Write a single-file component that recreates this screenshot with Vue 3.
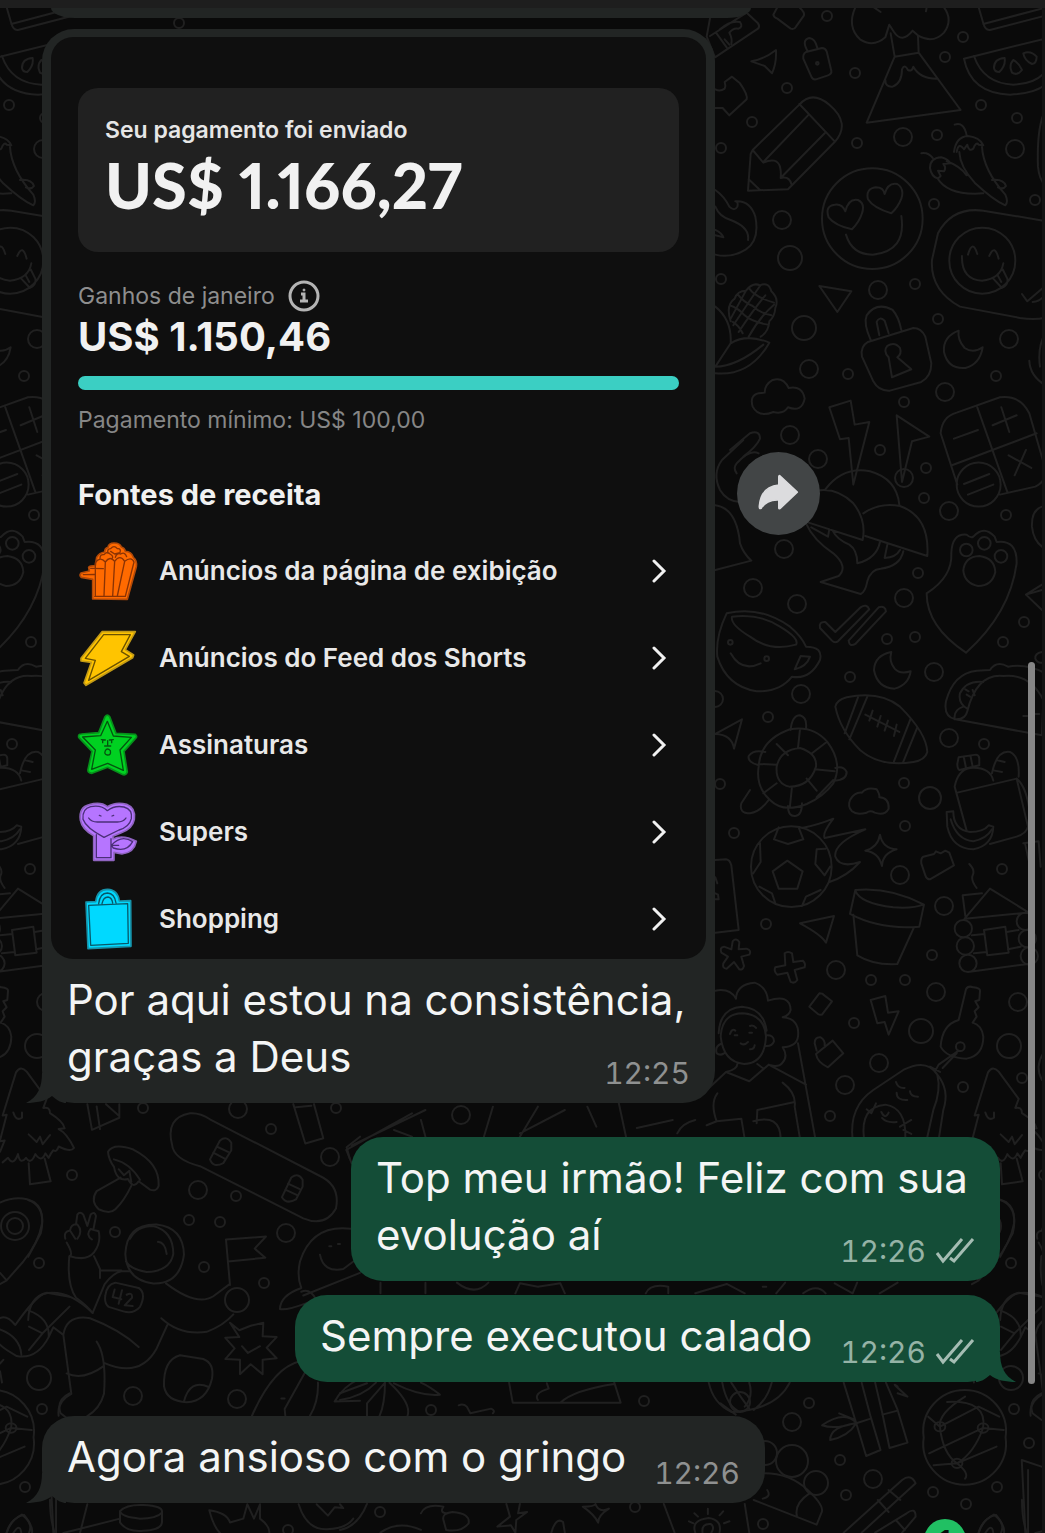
<template>
  <div class="chat">
    <svg class="wallpaper" aria-hidden="true">
      <defs>
        <g id="doodles">
          <circle v-for="(c, i) in bubbles" :key="'c' + i" :cx="c[0]" :cy="c[1]" :r="c[2]" />
          <g v-for="(group, i) in doodles" :key="'g' + i" :transform="group.transform">
            <path v-for="(d, j) in group.paths" :key="j" :d="d" />
          </g>
        </g>
      </defs>
      <use href="#doodles" />
      <use href="#doodles" x="-972" />
      <use href="#doodles" x="972" />
    </svg>

    <header class="top-bar"></header>
    <div class="previous-message"></div>

    <main class="messages">
      <div class="row">
        <article class="bubble incoming with-photo">
          <section class="photo">
            <div class="payment-card">
              <p class="payment-label">Seu pagamento foi enviado</p>
              <p class="payment-value">US$ 1.166,27</p>
            </div>

            <div class="earnings-label">
              <span>Ganhos de janeiro</span>
              <svg class="info-icon" viewBox="0 0 32 32" fill="none" stroke="currentColor">
                <circle cx="16" cy="16" r="14" stroke-width="3" />
                <path d="M13 14h3v7M12 21h8" stroke-width="3" />
                <circle cx="16" cy="10" r="1" stroke-width="1" fill="currentColor" />
              </svg>
            </div>
            <p class="earnings-value">US$ 1.150,46</p>
            <div class="progress"></div>
            <p class="minimum">Pagamento mínimo: US$ 100,00</p>

            <h2 class="sources-title">Fontes de receita</h2>
            <ul class="sources">
              <li v-for="source in sources" :key="source.label" class="source">
                <svg class="source-icon" :viewBox="source.viewBox">
                  <path
                    v-for="(shape, i) in source.shapes"
                    :key="i"
                    :d="shape.d"
                    :fill="shape.fill || 'none'"
                    :stroke="shape.stroke"
                    :stroke-width="shape.width || 4"
                  />
                </svg>
                <span class="source-label">{{ source.label }}</span>
                <svg class="chevron" viewBox="0 0 16 26">
                  <path d="M3 4l10 10L3 24" />
                </svg>
              </li>
            </ul>
          </section>

          <div class="text">
            Por aqui estou na consistência, graças a Deus
            <span class="meta"><time>12:25</time></span>
          </div>
          <svg class="tail" viewBox="0 0 40 30"><path :d="tailPath" /></svg>
        </article>

        <button class="forward" type="button" aria-label="Encaminhar">
          <svg viewBox="112 36 248 248">
            <path d="M240 107L292 156L240 205Q237 206 237 203V179Q201 177 184 204Q178 207 179 197Q184 140 237 135V110Q237 106 240 107Z" />
          </svg>
        </button>
      </div>

      <div v-for="message in messages" :key="message.text" class="row" :class="{ own: message.own, next: message.next }">
        <article class="bubble" :class="message.own ? 'outgoing' : 'incoming'">
          <div class="text">
            {{ message.text }}
            <span class="meta">
              <time>{{ message.time }}</time>
              <svg v-if="message.own" class="ticks" viewBox="0 0 40 28">
                <path d="M2 16l6 8L27 2M15 21l4 3L38 2" />
              </svg>
            </span>
          </div>
          <svg v-if="message.tail" class="tail" viewBox="0 0 40 30"><path :d="tailPath" /></svg>
        </article>
      </div>
    </main>

    <div class="scroll-thumb"></div>
    <div class="edge"></div>
    <span class="unread">1</span>
  </div>
</template>

<script setup>
const tailPath = 'M16 0C16 14 12 24 0 30C10 30 20 28 26 23C32 28 36 30 40 30V0Z'

const messages = [
  { text: 'Top meu irmão! Feliz com sua evolução aí', time: '12:26', own: true },
  { text: 'Sempre executou calado', time: '12:26', own: true, tail: true, next: true },
  { text: 'Agora ansioso com o gringo', time: '12:26', tail: true }
]

const sources = [
  {
    label: 'Anúncios da página de exibição',
    viewBox: '54 30 180 180',
    shapes: [
      { d: 'M98 207V148L64 142Q57 136 63 129L88 123L86 112Q90 107 106 107L110 82Q118 68 134 66Q134 54 144 52Q146 39 162 39Q180 39 184 51Q194 54 196 64Q214 64 220 82Q232 92 229 110L202 208Z', fill: '#ff6a00', stroke: '#b34a08', width: 5 },
      { d: 'M106 198V98Q120 78 136 96L132 198M136 96Q150 76 164 94L158 198M164 94Q180 72 194 94L172 198M194 94Q214 78 222 96L196 199H104M92 115L130 116M70 134L104 133M120 86Q120 72 132 74Q142 62 150 72Q162 78 156 86M144 70Q140 56 152 56Q162 44 172 56Q184 54 180 68L164 72L152 64M166 82Q170 68 182 72Q194 64 200 80', stroke: '#8a3304', width: 4 }
    ]
  },
  {
    label: 'Anúncios do Feed dos Shorts',
    viewBox: '54 292 180 180',
    shapes: [
      { d: 'M126 306H226L196 360L221 376L218 384L78 467L72 460L94 398L63 394V386Z', fill: '#ffc400', stroke: '#c29a16', width: 5 },
      { d: 'M131 315H211L184 366L208 380L86 452L106 392L76 386Z', stroke: '#6b5200', width: 4 }
    ]
  },
  {
    label: 'Assinaturas',
    viewBox: '54 -78 180 180',
    shapes: [
      { d: 'M135 -70Q142 -79 149 -70L168 -20L226 -17Q234 -10 226 -4L192 34L202 96Q198 108 186 103L143 82L96 100Q82 99 84 88L96 34L56 -8Q54 -18 64 -18L116 -22Z', fill: '#00d121', stroke: '#078f1b', width: 5 },
      { d: 'M142 -56L160 -12L214 -8L180 30L190 91L143 70L95 88L106 30L68 -9L122 -13Z', stroke: '#04540f', width: 4 },
      { d: 'M124 -1L136 0M148 0L160 -1M128 0V8M155 0V8M143 2V16M134 18H152M136 32Q142 22 151 32Q154 46 142 45Q131 43 136 32', stroke: '#04540f', width: 4 }
    ]
  },
  {
    label: 'Supers',
    viewBox: '54 183 180 180',
    shapes: [
      { d: 'M142 200Q168 184 200 193Q228 204 223 238Q218 266 184 278L159 289V297Q188 282 229 304Q222 338 186 342L162 337V361H101V287Q66 268 61 240Q56 202 88 194Q122 184 142 200Z', fill: '#b675ff', stroke: '#8f64c0', width: 5 },
      { d: 'M142 212Q164 195 192 201Q218 208 214 236Q208 261 177 270L132 292Q78 264 69 238Q66 206 92 200Q124 194 142 212ZM109 284V353H153V296M154 316Q184 282 218 305Q200 338 160 324L154 316H176M86 234Q94 246 112 246H172Q190 246 198 234M118 226L123 228M156 228L161 226', stroke: '#4b2f78', width: 4 }
    ]
  },
  {
    label: 'Shopping',
    viewBox: '54 445 180 180',
    shapes: [
      { d: 'M78 487L107 486Q112 449 143 449Q173 450 178 484L212 483L213 620L84 627Z', fill: '#00d9ff', stroke: '#1792a9', width: 5 },
      { d: 'M86 497L203 492L205 611L92 617ZM116 492Q120 460 142 460Q164 461 168 490M126 492Q130 472 144 472Q156 474 158 490', stroke: '#07586a', width: 4 }
    ]
  }
]

// Small circles between the drawings: [cx, cy, r]
const bubbles = [
  [827, 16, 5], [963, 37, 5], [945, 57, 5], [855, 73, 5], [787, 88, 5], [752, 122, 5], [721, 148, 5],
  [857, 143, 5], [903, 137, 9], [937, 135, 5], [981, 105, 5], [1017, 118, 5], [1015, 149, 9], [934, 204, 5],
  [1035, 200, 5], [782, 220, 9], [790, 258, 12], [721, 279, 5], [878, 290, 9], [915, 284, 5], [804, 328, 12],
  [809, 369, 9], [848, 374, 5], [938, 319, 5], [1009, 339, 9], [996, 376, 5], [945, 392, 9], [904, 402, 5],
  [790, 435, 9], [818, 459, 9], [880, 450, 5], [904, 478, 9], [926, 468, 5], [924, 498, 5], [949, 511, 9],
  [1006, 515, 5], [784, 549, 9], [753, 588, 9], [797, 604, 9], [918, 573, 5], [904, 598, 9], [887, 639, 5],
  [915, 637, 5], [1024, 622, 5], [1003, 642, 5], [850, 677, 5], [934, 672, 9], [801, 694, 9], [715, 699, 8],
  [768, 717, 5], [949, 738, 9], [984, 744, 5], [720, 784, 5], [904, 783, 5], [930, 798, 11], [905, 826, 5],
  [734, 833, 5], [900, 875, 9], [1002, 869, 5], [944, 906, 9], [766, 924, 5], [932, 955, 5], [836, 970, 9],
  [871, 980, 5], [905, 980, 5], [936, 992, 9], [1018, 1002, 9], [854, 1023, 5], [921, 1031, 12], [879, 1063, 9],
  [1009, 1046, 12], [845, 1085, 9], [963, 1087, 5], [1022, 1078, 5], [830, 1116, 5], [143, 1108, 5],
  [238, 1109, 9], [271, 1129, 5], [336, 1108, 5], [330, 1157, 9], [72, 1175, 5], [198, 1190, 9], [236, 1196, 5],
  [189, 1220, 5], [220, 1222, 5], [115, 1232, 5], [286, 1233, 9], [39, 1263, 5], [204, 1267, 5], [264, 1283, 5],
  [39, 1378, 12], [133, 1396, 9], [237, 1399, 9], [42, 1409, 5], [25, 1487, 5], [288, 1530, 5], [461, 1115, 9],
  [644, 1401, 5], [809, 1403, 5], [792, 1422, 9], [1029, 1443, 5], [840, 1460, 5], [873, 1479, 9], [846, 1495, 5],
  [933, 1492, 5], [966, 1504, 5], [431, 1410, 5], [380, 1512, 5], [635, 1507, 5], [763, 1524, 5], [179, 23, 5],
  [740, 1402, 10], [792, 1461, 16], [765, 1453, 12], [816, 1483, 12], [15, 1226, 14], [15, 1226, 8], [237, 1300, 12]
]

const doodles = [
  {
    transform: 'translate(700 0) scale(.3333)',
    paths: [
      // money, tile, small lock
      'M30 55L20 110M20 110L45 172L175 85Q180 78 174 70L140 38L30 108M60 88Q90 60 120 66Q130 80 116 86Q100 82 88 98Q98 116 94 132M48 98L80 142M74 118L88 134',
      'M232 22L220 44Q222 52 232 56L272 86Q282 90 288 80L312 46Q314 36 300 24',
      'M322 152Q304 120 328 114Q346 116 352 144M318 156L366 144Q376 144 380 154L394 212Q396 222 384 226L348 238Q338 240 334 230L310 176Q308 162 318 156ZM348 190A4 4 0 0 0 356 190A4 4 0 0 0 348 190',
      'M154 184Q192 178 228 150Q230 190 216 220L194 198Z',
      // volcano
      'M466 22Q440 80 480 118Q520 144 556 112L568 74L582 96Q606 132 638 92L656 108Q700 132 732 98Q760 60 732 22M522 22L542 36M680 22L678 34M572 100L584 170L656 158L654 108M584 170L500 368L782 330L656 158M556 240Q556 262 578 260Q606 250 606 208Q614 190 624 210Q636 216 640 200Q660 236 710 236',
      // watermelon slice
      'M836 22L850 70Q856 92 870 90L1040 46M850 72L1040 22M792 176L1100 100M792 176Q812 280 930 284Q1020 280 1050 240M822 168Q850 250 940 254Q1000 252 1030 222M882 204Q882 176 914 174Q918 196 898 216Q884 216 882 204ZM932 206Q930 190 940 180Q958 190 966 210Q952 228 936 218ZM970 160Q992 150 1010 170Q1010 190 996 192Q974 182 970 160Z',
      // puzzle piece
      'M46 268Q60 276 74 266Q78 258 74 246L96 230L120 250Q144 284 140 298L88 346L68 324H46',
      // pencil
      'M158 450L298 314Q336 270 388 314Q454 370 404 426L264 568L144 572L152 462ZM298 312L404 424M324 346L190 486M374 400L244 532M158 450L190 488Q230 470 240 500Q244 516 242 534Q268 528 274 552M146 538L180 570',
      // chillies
      'M764 374Q792 364 800 406M762 456Q768 410 804 408Q840 412 850 436L836 434Q828 424 820 446Q806 456 802 434L792 448Q776 424 770 456M778 456Q780 500 824 548Q880 600 916 616Q926 606 916 584Q850 510 846 440M876 540Q910 536 918 558Q910 570 894 562M664 460Q684 456 698 474M690 504Q690 474 724 472Q746 478 750 490L730 492Q740 504 732 514L714 512L722 528L714 536Q694 530 690 504M712 534Q744 588 850 580M740 484Q780 498 800 526',
      // smiley with heart eyes
      'M366 656A150 150 0 1 1 668 656A150 150 0 1 1 366 656ZM456 688Q404 676 386 652Q374 618 404 614Q426 610 436 634Q446 594 474 600Q496 610 486 640Q478 666 456 688ZM574 640Q520 624 504 598Q496 566 528 562Q550 562 554 582Q564 546 592 552Q614 566 604 596Q594 622 574 640ZM438 704Q456 764 518 764Q620 754 604 648',
      // flame
      'M46 570Q74 590 88 620Q104 636 112 620Q116 606 106 604Q150 600 166 650Q180 720 138 748Q94 776 46 764M46 620Q58 650 92 660Q150 682 144 720M46 690Q66 700 70 712L46 706',
      // phone with tongue smiley
      'M1030 662L850 632Q756 620 714 700L696 780Q690 870 780 920L960 954Q1010 962 1050 950M748 782A99 99 0 1 1 946 782A99 99 0 1 1 748 782ZM804 764Q818 716 832 762M868 768Q884 730 896 776M786 768Q784 838 846 842Q902 836 910 790M880 836L906 864Q926 854 922 836L908 808M892 824L904 846',
      'M966 882L982 904L1026 866M998 906Q1020 906 1040 880',
      // corn
      'M92 964Q76 916 104 896Q112 872 138 872Q158 846 180 856Q206 844 214 874Q238 896 226 924Q224 950 208 964Q206 996 182 1010M114 884Q130 906 158 918Q180 940 214 946M90 916Q116 926 134 946Q156 966 204 974M98 966Q116 976 128 1000M148 866Q166 892 222 908M138 872L92 956M180 858Q150 900 100 976M196 886Q160 930 116 996M222 914Q180 950 146 1010M46 920Q96 960 92 1030L46 1100M92 1030Q140 1000 208 1028Q150 1130 46 1120M46 1100Q110 1100 190 1034',
      'M358 858L454 874L412 936Z',
      // padlock
      'M512 1020Q490 970 500 946Q530 904 578 930Q596 950 604 990M538 1006L530 966Q538 948 554 962L566 1000M504 1026L640 984Q664 984 676 1010L694 1090Q694 1130 664 1146L570 1172Q536 1174 520 1144L486 1070Q480 1040 504 1026ZM566 1072Q548 1054 562 1038Q584 1024 600 1044Q606 1062 592 1072L634 1108L576 1132Z',
      'M776 992Q728 1010 732 1056Q744 1108 796 1104Q840 1092 848 1042Q820 1062 794 1044Q772 1020 776 992Z',
      'M176 1180Q148 1186 158 1220Q176 1254 220 1236Q250 1244 264 1222Q306 1238 314 1196Q308 1156 266 1164Q250 1130 218 1140Q194 1154 194 1178Z',
      'M388 1222L452 1202L464 1274L508 1266L460 1454L446 1314L420 1318Z',
      'M590 1246L688 1310L636 1324L606 1446Z',
      // calculator
      'M722 1300Q726 1250 770 1238L900 1192Q960 1184 988 1240L1040 1420Q1030 1450 1006 1460L900 1484M722 1300L772 1454M832 1222L922 1476M756 1396L1010 1300M762 1316L834 1290M878 1276L950 1246M904 1222L928 1296M926 1366L994 1404M978 1350L944 1426M770 1454A66 66 0 1 0 902 1454A66 66 0 1 0 770 1454M792 1452L868 1422M804 1484L880 1454',
      'M988 1082Q990 1130 1040 1158M1036 1000Q1012 1040 1020 1100M1036 330Q1010 380 1014 500Q1018 540 1036 556',
      'M90 1350L150 1300Q180 1290 180 1316Q170 1340 130 1370'
    ]
  },
  {
    transform: 'translate(700 440) scale(.3333)',
    paths: [
      'M130 0L66 60Q36 100 60 150Q80 184 120 186M176 40Q150 26 110 70Q98 84 110 100',
      'M46 196Q110 204 120 310Q130 340 154 362L46 390',
      // mushrooms
      'M376 148Q430 78 510 94Q590 116 598 194M320 160Q400 130 460 190Q500 240 488 300L326 248M490 220Q540 186 600 198Q690 230 682 348L496 288M318 250Q340 300 400 340Q446 380 416 408L362 426L482 462Q496 456 502 424Q512 388 542 386Q600 380 610 334M334 262L384 290L388 268M398 272Q410 298 448 314Q472 330 472 370Q530 356 540 306M562 314L554 354Q588 352 600 330',
      // paw
      'M680 460Q758 410 754 340Q756 280 800 284Q812 296 820 290Q852 254 884 290Q890 306 890 306Q952 298 950 370Q930 520 798 638Q680 560 680 460ZM780 330A19 19 0 1 0 818 330A19 19 0 1 0 780 330M834 310A19 19 0 1 0 872 310A19 19 0 1 0 834 310M884 349A19 19 0 1 0 922 349A19 19 0 1 0 884 349M790 392Q794 350 838 348Q884 354 886 396Q876 438 834 438Q794 430 790 392Z',
      'M1026 200Q994 210 996 260Q1000 300 1026 320M1026 434L978 464L1026 510M978 464L1026 450',
      // cup
      'M80 520Q180 496 270 560Q306 590 318 620Q370 620 360 660Q330 720 276 710Q240 756 170 754Q80 740 52 650Q46 590 80 520ZM96 530Q180 520 240 560Q300 596 288 614Q210 636 150 590Q90 554 96 530ZM302 648L330 650Q320 680 284 688ZM84 607A7 7 0 0 0 98 607A7 7 0 0 0 84 607M193 656A7 7 0 0 0 207 656A7 7 0 0 0 193 656M92 640Q124 698 182 670',
      // double check
      'M360 564Q356 544 376 546L406 576L482 502Q500 490 508 508L414 604Q404 610 396 602ZM446 602L536 502Q556 496 558 514L466 612Q448 622 446 602Z',
      'M574 636Q524 646 522 690Q532 744 584 746Q626 734 632 694Q600 704 584 686Q566 664 574 636Z',
      // football
      'M406 800Q410 780 440 772Q540 752 600 800Q680 880 682 936Q676 960 640 966Q540 982 480 930Q420 870 406 800ZM474 772L434 880M502 770L448 898M632 836L582 964M652 862L608 970M496 824L598 876M518 812L508 842M542 828L532 860M564 842L554 872M590 854L582 888',
      // taco
      'M766 838Q730 830 738 784Q760 700 830 692Q860 690 870 690Q890 660 924 680Q980 670 1036 700M766 838Q796 840 802 814Q830 700 910 708Q990 700 1030 780L1026 886L766 838M802 806Q774 790 780 760Q800 720 850 726M790 800Q760 810 764 838M800 764L810 770M796 748L806 754M818 750L824 766M970 828H982M1006 822H1018',
      'M46 882L126 838L102 926Q96 884 46 882Z',
      // turtle
      'M176 980Q180 900 270 868Q340 856 382 906Q430 970 400 1030Q370 1070 320 1092Q250 1120 210 1080Q166 1040 176 980ZM230 980Q240 930 300 924Q352 940 348 980Q330 1040 268 1040Q226 1030 230 980ZM272 870Q276 826 300 826Q322 832 318 866M176 976Q142 966 146 948Q160 928 196 936M404 1022Q440 1020 440 996Q430 976 406 984M300 868L294 924M380 906L336 940M230 912L264 946M176 972L230 974M344 988L404 994M230 1030L190 1060M320 1016L350 1052M276 1040L270 1098M150 1050L124 1090Q116 1120 150 1120Q180 1116 206 1080M264 1098Q264 1130 286 1128Q306 1126 306 1090M350 1072L400 1020',
      // lunch bag
      'M776 952L828 944Q838 946 838 956V976L778 990Q772 986 772 972ZM792 954L798 984M812 950L818 980M764 1040Q774 990 810 984Q870 980 880 1022M876 1000Q890 930 930 936Q960 950 956 1010M890 960L914 966M884 992L906 996M772 1058L950 1016L984 1160Q980 1180 950 1190L870 1212M764 1040L800 1172M950 1016Q980 1040 990 1120',
      'M1026 636Q1004 640 1006 656Q1012 670 1026 668'
    ]
  },
  {
    transform: 'translate(700 780) scale(.3333)',
    paths: [
      'M450 60Q464 36 486 38Q500 20 530 28Q540 44 538 52Q568 54 566 86Q554 108 524 98Q510 90 500 98Q470 106 456 94Q442 80 450 60Z',
      // banana
      'M740 96L760 94Q760 150 810 156Q850 156 866 136L880 140Q878 196 820 208Q756 206 742 140Z',
      'M752 118Q770 180 820 184Q860 176 876 148',
      // flaming ball
      'M153 260A121 121 0 1 1 395 260A121 121 0 1 1 153 260ZM262 242L308 274L292 326L236 326L218 274ZM236 142L222 178L264 192L310 178L296 142M180 190L182 246L160 280M376 206L350 208L346 252L374 286L390 260M178 320L216 340L226 370M362 330L318 350L306 378M306 144Q350 136 400 116Q366 160 374 174Q420 164 496 148Q400 190 406 230Q420 266 480 246Q440 290 388 306',
      'M540 164Q548 206 590 208Q548 220 546 258Q536 216 496 212Q534 202 540 164Z',
      'M670 230L702 222L708 214L722 220L736 212L748 218L762 256L690 298Q680 298 676 286L664 250Q662 236 670 230Z',
      'M46 240L78 238Q90 240 94 256L116 450L46 458M46 340L54 344L56 358H46M46 292L52 310',
      // flower pot
      'M466 330Q570 320 672 374L658 440Q540 450 450 402ZM466 332Q480 370 580 382Q640 386 670 374M460 404L472 526Q520 556 592 552L642 442',
      'M300 430L402 408L378 488Q364 464 300 430Z',
      // asterisk and plus
      'M98 484Q108 472 118 486L116 508L140 506Q156 512 148 524L124 530L132 558Q128 572 118 568L102 546L80 566Q66 566 70 550L84 530L64 518Q58 502 72 500L94 508Z',
      'M254 520Q264 512 276 520L280 546L308 542Q318 550 314 562L284 570L292 600Q284 612 272 606L262 578L232 584Q220 574 226 562L256 556Z',
      // log cabin
      'M808 252Q826 270 818 286Q812 300 830 324M788 346L846 340M788 346L796 408M794 416L870 326L990 400M794 416L980 398M764 446A26 26 0 1 0 816 446A26 26 0 1 0 764 446M770 498A26 26 0 1 0 822 498A26 26 0 1 0 770 498M778 550A26 26 0 1 0 830 550A26 26 0 1 0 778 550M950 424A26 26 0 1 0 1002 424A26 26 0 1 0 950 424M956 476A26 26 0 1 0 1008 476A26 26 0 1 0 956 476M962 528A26 26 0 1 0 1014 528A26 26 0 1 0 962 528M816 466L854 462M920 456L956 450M822 520L860 516M924 508L962 500M852 450L916 440L926 518L862 526ZM804 576L984 552M970 190L1016 184L1022 260M976 194L986 240',
      // woman
      'M46 632Q90 624 108 656Q110 612 164 608Q200 620 204 662Q270 640 272 690Q268 706 248 712Q300 716 294 770Q290 800 248 802Q266 830 246 850Q236 862 212 856M62 770Q66 700 128 700Q194 704 198 770Q194 850 132 852Q70 846 62 770ZM56 760Q60 684 126 680Q190 684 200 752M198 766Q222 764 222 784Q216 800 196 798M62 792Q44 800 50 820Q60 828 72 820M90 762Q96 744 106 752M150 738Q160 734 168 744M104 766H112M148 758H156M122 790Q134 798 144 786M150 808Q162 808 164 796M112 852Q112 868 78 876L148 904L206 854L318 914M172 852L188 864M78 876L10 940M52 940Q30 970 50 1024L20 1036M50 1024L124 1016L134 1076M248 908Q290 940 284 980L300 1076M170 1030L172 990L284 966M160 1024Q240 1000 242 1076M294 790L346 1076',
      'M358 640Q368 640 370 644L396 664L366 704Q360 706 354 702L328 680Z',
      'M512 660L556 648L564 698L596 694L566 764L554 726L532 730Z',
      'M350 812L344 790Q344 770 362 772Q376 780 374 796M348 822L398 782L430 820L384 862Q352 848 348 822Z',
      // key
      'M776 720L798 628Q804 616 820 622Q842 624 840 634L838 660L826 664L836 682L824 694L830 710L818 728M776 720Q726 734 722 800Q740 834 800 836Q850 826 850 770Q846 736 818 728M768 800A12 12 0 1 0 794 800A12 12 0 1 0 768 800M776 812L716 854L706 872M770 820L728 864M690 860L720 876',
      // avocado
      'M458 1080Q446 980 520 930L610 870Q680 834 712 884Q724 930 700 990L680 1080M712 884Q750 930 730 990L716 1080M492 1076Q480 980 556 974Q620 984 616 1076M588 906Q594 926 614 924M630 934Q632 950 654 950M590 938Q590 962 622 960M500 988L514 1000L528 970M544 996Q556 1020 566 998M546 1014Q560 1030 590 1026M600 1040L634 1020M610 1050L634 1062',
      'M1030 820Q1004 860 1026 900'
    ]
  },
  {
    transform: 'translate(0 940) scale(.3333 .3782)',
    paths: [
      // tree
      'M8 464L48 350Q62 330 80 348L140 420M140 420L130 444Q150 440 150 458Q190 480 194 498L176 500Q200 510 222 550Q212 562 176 546Q170 562 160 556Q152 564 146 576L136 564Q124 590 106 566Q92 596 78 576Q60 596 54 566Q40 600 24 576L8 588M8 464L20 462L0 530M0 560L14 530L0 532M40 456Q48 480 66 470V456M86 514L110 534L120 520L128 540L150 516M86 590L90 646L152 638L134 578',
      'M262 434L276 502L358 470V434M290 440L300 500M318 434L356 464M880 434L916 538L970 524L942 434M888 442L934 438',
      // skateboard and mushroom
      'M516 540Q496 470 570 458Q600 456 630 474L960 624Q1022 650 1008 710Q976 760 910 736L600 598Q520 580 516 540ZM630 580L660 530Q680 516 694 536V556L670 590Q640 604 630 580ZM640 562L674 578M650 546L684 560M846 680L874 628Q896 614 908 634V652L888 686Q860 700 846 680ZM856 660L890 674M864 644L898 658',
      'M324 560Q340 536 400 554Q480 590 476 650Q470 666 450 660L416 638Q400 660 384 632Q350 640 342 600Q326 580 324 560ZM342 580Q390 590 420 634M362 628L290 664Q270 690 296 712Q330 726 346 712Q372 690 394 650M356 606L372 622L388 610L394 640',
      // map pin
      'M0 694Q60 672 104 694Q130 710 126 750Q116 800 70 850L20 900L0 910M0 880L20 900',
      // astronaut
      'M208 836Q200 910 228 946Q260 966 278 986L314 910Q340 880 364 876L390 876M300 894V870L282 836M300 874H364M196 790Q190 770 210 768L226 790M210 768Q214 750 232 752Q250 770 232 790M228 752L232 726Q240 716 250 726L262 756L272 726Q284 716 288 730L280 766M200 800Q220 830 210 836Q260 850 282 826Q304 800 296 770L272 764Q256 780 276 792',
      'M376 830Q380 750 470 752Q550 760 552 832Q540 910 460 908Q380 900 376 830ZM390 790Q410 756 460 756Q520 770 520 830Q510 876 440 878Q390 870 378 850M474 798Q496 800 500 830M316 940Q320 910 346 906L416 920Q440 934 420 970Q400 990 370 982L326 970Q312 960 316 940ZM344 924L338 944L364 950M366 926L356 962M380 938Q398 930 396 946L374 966L398 968',
      'M498 908Q590 970 640 942L686 912M484 1000Q540 1046 620 1036Q670 1020 700 990M690 912L678 792L798 784L764 816L796 840L684 850M278 986Q200 920 130 936Q100 950 46 1018Q20 990 0 1000M86 980Q150 1000 146 1050Q110 1110 50 1100Q10 1080 0 1070M0 1030Q60 1050 64 1096M146 1050L160 1024L190 1044Q200 990 270 1000Q360 1030 416 1076M190 1044L214 1200Q170 1220 176 1258M290 1062Q320 1100 312 1200Q300 1240 260 1260M200 1146Q250 1166 312 1126M312 1118Q420 1160 470 1080L502 1018',
      'M690 1012L718 1032L752 1020L790 1012L788 1048L830 1050L800 1078L830 1106L788 1110V1148L752 1122L720 1148V1110L676 1108L704 1080L676 1052L718 1050ZM726 1074L744 1092L780 1074',
      'M492 1180Q490 1110 540 1098L610 1108Q644 1120 636 1160Q620 1220 560 1222Q500 1220 492 1180ZM552 1220Q570 1160 626 1182',
      // fish, banana peel
      'M1080 768Q940 740 900 850Q890 890 904 920Q840 940 840 976Q860 980 926 958M904 930Q930 920 948 950M910 940L1080 880M988 810H994M1014 804H1020M960 832Q970 880 1030 870L1060 850M1080 520L1040 548L1050 580',
      'M756 1258Q820 1130 900 1114M930 1120L854 1240L856 1258M954 1170Q956 1220 930 1258M1004 1220Q1030 1180 1080 1160M1004 1220L1080 1218M844 1212H854',
      'M150 1480Q150 1530 164 1568M262 1492L240 1568M190 1568L360 1530M20 1568Q30 1530 72 1520Q100 1550 96 1568M40 1568Q60 1540 64 1568M360 1510Q380 1492 430 1494Q490 1496 486 1514Q470 1530 420 1530Q364 1526 360 1510ZM360 1510V1540Q380 1566 430 1562Q484 1560 486 1540V1514M628 1508Q640 1550 660 1568M628 1508Q680 1514 690 1540L730 1530L742 1492L762 1530L780 1492V1530Q810 1550 808 1568M896 1492Q920 1560 980 1558Q1040 1556 1060 1530M950 1492L984 1522L1004 1500L1030 1502L1020 1492M0 1120L10 1110M0 1140L6 1170'
    ]
  },
  {
    transform: 'translate(340 1120) scale(.4497 .3333)',
    paths: [
      'M14 90L160 -20M14 90L26 130M26 76L190 -30M180 0L190 50M120 30L160 50M320 50L340 -40M400 50L440 -40M500 -30L400 40M550 -40L570 20M620 -50L636 50M660 24L740 0M750 40Q760 10 790 0',
      'M90 520V488M190 520V488M260 488Q300 530 330 488M390 520L400 490L440 500L490 490L500 520M680 520Q690 490 730 500V520M790 520L860 492L900 520M940 500H948M970 520L990 488M1030 520Q1060 490 1080 520M1100 490L1140 520L1150 488M1200 520L1240 488',
      'M1468 240Q1510 260 1496 340L1468 410M1468 600Q1470 530 1510 518L1560 530M1470 620L1500 640L1470 690M1500 640L1560 560',
      // palm, picture, pumpkin
      'M0 840Q50 830 80 788M0 820L60 790M100 788L60 850V888M100 788Q100 850 88 888M110 788Q160 850 150 888M120 790Q180 830 222 824Q200 800 180 788M264 856Q274 850 282 860L290 880L336 866Q346 872 340 880M376 788L384 848H624L610 788M460 790L464 806Q430 820 440 840M490 848Q520 810 610 792',
      'M820 788Q830 850 870 876Q970 870 1000 788M850 788Q860 860 890 876M870 788Q890 830 910 866M910 788Q920 830 900 860M960 788Q950 840 920 870M846 850L880 884',
      // bamboo
      'M1120 788L1148 910L1170 1008L1202 990L1180 890L1160 788M1148 910L1180 896M1190 788L1206 880L1222 984L1262 968L1240 870L1214 788M1206 884L1240 872M1148 910Q1130 950 1090 960Q1090 920 1148 910M1148 908Q1120 870 1072 916Q1100 930 1148 908M1110 880L1146 900M1240 800Q1220 780 1262 830L1240 820',
      // globe
      'M1298 952A92 124 0 1 1 1480 952A92 124 0 1 1 1298 952ZM1390 830Q1330 880 1334 920Q1340 1000 1372 1030Q1400 1060 1390 1076M1350 846Q1440 840 1430 924Q1410 1000 1372 1030M1308 890L1334 920L1420 860L1466 890M1310 1000L1430 924L1476 930M1320 1036L1372 1030L1460 980M1322 920A12 14 0 1 0 1346 920A12 14 0 1 0 1322 920M1418 924A12 14 0 1 0 1442 924A12 14 0 1 0 1418 924M1360 1030A12 14 0 1 0 1384 1030A12 14 0 1 0 1360 1030',
      'M944 1060Q1000 1060 1040 1110Q1080 1160 1070 1180L1060 1214L920 1140M1044 1120Q1010 1150 1016 1188M950 1110Q960 1130 940 1136',
      'M1120 1238L1250 1080Q1270 1060 1280 1090L1160 1238M1220 1110L1246 1140M1196 1140L1220 1176M1190 1238L1260 1180Q1280 1160 1280 1190L1250 1238M1236 1200L1256 1230',
      'M1516 1020L1560 1040M1516 1020L1524 1238M1530 1050V1238M1420 1238Q1430 1200 1454 1184Q1480 1210 1470 1238M1560 820Q1530 840 1540 880L1560 900',
      'M720 1152L744 1238M900 1152L910 1238M790 1238Q780 1200 820 1194Q850 1200 844 1238M806 1238Q804 1210 824 1212Q834 1220 826 1238M818 1166V1182M788 1180L796 1190M852 1174L844 1186M776 1204L786 1210M866 1204L854 1210',
      'M540 1160Q566 1160 568 1152Q576 1180 598 1166Q574 1186 574 1208Q566 1184 540 1160ZM370 1152L378 1190L350 1220L380 1216L390 1238L392 1200L416 1176L396 1180L400 1152M470 1238Q480 1190 496 1206L500 1238M230 1200Q226 1180 250 1176Q290 1180 286 1210Q270 1238 236 1230ZM180 1180Q190 1150 230 1160Q220 1180 240 1180M60 1152Q40 1220 0 1230M90 1238Q130 1200 180 1230'
    ]
  }
]
</script>

<style>
body {
  margin: 0;
  background: #0a0a0a;
}
</style>

<style scoped>
.chat {
  position: relative;
  min-height: 100vh;
  overflow: hidden;
  background: #0a0a0a;
  color: #f4f5f5;
  font-family: Inter, "Liberation Sans", sans-serif;
}

p,
h2,
ul {
  margin: 0;
  padding: 0;
}

.wallpaper {
  position: absolute;
  top: 0;
  left: 0;
  width: 100%;
  height: 100%;
  fill: none;
  stroke: #202020;
  stroke-width: 2px;
  stroke-linecap: round;
  stroke-linejoin: round;
}

.wallpaper path,
.wallpaper circle {
  vector-effect: non-scaling-stroke;
}

.top-bar {
  position: relative;
  height: 8px;
  background: #1e1e1e;
}

.previous-message {
  position: relative;
  width: 700px;
  height: 10px;
  margin-left: 51px;
  background: #222524;
  border-radius: 0 0 24px 24px / 0 0 10px 10px;
}

.messages {
  position: relative;
  padding: 11px 45px 30px 42px;
}

.row {
  display: flex;
  align-items: center;
  margin-bottom: 34px;
}

.row:last-child {
  margin-bottom: 0;
}

.row.own {
  justify-content: flex-end;
}

.row.own:has(+ .next) {
  margin-bottom: 14px;
}

.bubble {
  position: relative;
  max-width: 760px;
  box-sizing: border-box;
  border-radius: 32px;
}

.incoming {
  background: #222524;
  color: #222524;
}

.outgoing {
  background: #144d37;
  color: #144d37;
}

.bubble.with-photo {
  max-width: 673px;
  padding-top: 8px;
}

.row.own:has(+ .next) .bubble {
  max-width: 649px;
}

.text {
  display: flow-root;
  padding: 12px 25px;
  color: #f4f5f5;
  font-size: 42px;
  line-height: 57px;
}

.meta {
  float: right;
  display: flex;
  align-items: center;
  gap: 9px;
  margin: 27px 0 0 28px;
  color: #8f9191;
  font-size: 30px;
  font-variant-numeric: tabular-nums;
  line-height: 36px;
}

.outgoing .meta {
  color: #95b3a6;
}

.ticks {
  width: 40px;
  height: 28px;
  fill: none;
  stroke: #a5bdb3;
  stroke-width: 3;
}

.tail {
  position: absolute;
  left: -16px;
  bottom: 0;
  width: 40px;
  height: 30px;
  fill: currentColor;
}

.outgoing .tail {
  left: auto;
  right: -16px;
  transform: scaleX(-1);
}

.photo {
  margin: 0 9px;
  padding: 51px 27px 11px;
  border-radius: 22px;
  background: #0f0f0f;
  color: #f1f1f1;
}

.payment-card {
  padding: 27px;
  border-radius: 20px;
  background: #212121;
}

.payment-label {
  color: #e6e6e6;
  font-size: 23px;
  font-weight: 600;
  line-height: 30px;
}

.payment-value {
  font-family: Lato, "Open Sans", sans-serif;
  font-size: 63px;
  font-weight: 900;
  font-variant-numeric: proportional-nums;
  line-height: 80px;
}

.earnings-label {
  display: flex;
  align-items: center;
  gap: 13px;
  margin-top: 29px;
  color: #8e8e8e;
  font-size: 23px;
  line-height: 30px;
}

.info-icon {
  width: 32px;
  height: 32px;
  margin: -1px 0;
  color: #b4b4b4;
}

.earnings-value {
  font-size: 40px;
  font-weight: 700;
  line-height: 52px;
}

.progress {
  height: 14px;
  margin-top: 13px;
  border-radius: 7px;
  background: #3bcfc3;
}

.minimum {
  margin-top: 15px;
  color: #868686;
  font-size: 23px;
  line-height: 30px;
}

.sources-title {
  margin-top: 42px;
  font-size: 29px;
  font-weight: 700;
  line-height: 36px;
}

.sources {
  display: grid;
  gap: 27px;
  margin-top: 27px;
  list-style: none;
}

.source {
  display: flex;
  align-items: center;
  height: 60px;
}

.source-icon {
  width: 60px;
  height: 60px;
  margin-right: 21px;
  overflow: visible;
  stroke-linejoin: round;
  stroke-linecap: round;
}

.source-label {
  flex: 1;
  color: #e8e8e8;
  font-size: 26px;
  font-weight: 600;
}

.chevron {
  width: 16px;
  height: 26px;
  margin-right: 12px;
  fill: none;
  stroke: #f1f1f1;
  stroke-width: 3;
  stroke-linecap: round;
}

.forward {
  flex: none;
  width: 83px;
  height: 83px;
  margin: 0 0 146px 22px;
  padding: 0;
  border: none;
  border-radius: 50%;
  background: #424546;
  cursor: pointer;
}

.forward svg {
  display: block;
  width: 83px;
  height: 83px;
  fill: #dcdcde;
  stroke: #dcdcde;
  stroke-width: 5;
  stroke-linejoin: round;
}

.scroll-thumb {
  position: absolute;
  top: 662px;
  right: 10px;
  width: 7px;
  height: 722px;
  border-radius: 4px;
  background: #868686;
}

.edge {
  position: absolute;
  top: 8px;
  right: 0;
  bottom: 0;
  width: 3px;
  background: #141414;
}

.unread {
  position: absolute;
  right: 79px;
  bottom: -28px;
  width: 42px;
  height: 42px;
  border-radius: 50%;
  background: #21c063;
  color: #0a0a0a;
  font-size: 26px;
  font-weight: 600;
  line-height: 42px;
  text-align: center;
}
</style>
